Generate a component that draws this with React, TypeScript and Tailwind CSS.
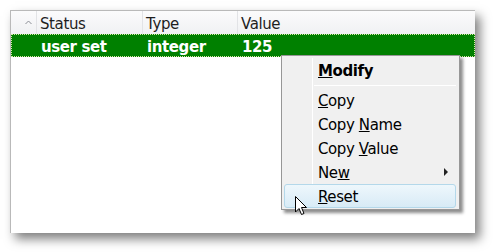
import React from "react";

const font = { fontFamily: '"DejaVu Sans", Verdana, sans-serif' };

function MenuItem({ children, hover, arrow }: { children: React.ReactNode; hover?: boolean; arrow?: boolean }) {
  return (
    <div className="relative h-[24px] flex items-center">
      {hover && (
        <div className="absolute left-[2px] right-[3px] top-[0px] bottom-[0px] rounded-[3px] border border-[#b4d8ea] bg-gradient-to-b from-[#eef7fc] to-[#d8ebf6]" />
      )}
      <span className="relative pl-[36px] pt-[2px] text-[15px] tracking-[-0.4px] text-black">{children}</span>
      {arrow && (
        <svg className="absolute left-[162px] top-[8px]" width="5" height="8" viewBox="0 0 5 8">
          <path d="M0 0 L4 4 L0 8 Z" fill="#222" />
        </svg>
      )}
    </div>
  );
}

export default function App() {
  return (
    <div className="relative w-[493px] h-[252px] bg-white overflow-hidden" style={font}>
      <div className="pt-[10px] pl-[10px]">
        <div className="w-[465px] h-[223px] bg-white border-t border-l border-[#b9b9b9] shadow-[5px_6px_10px_rgba(0,0,0,0.5)]">
          <div className="flex h-[23px] bg-gradient-to-b from-[#fbfbfc] to-[#f0f1f3] text-[15px] tracking-[-0.4px] text-[#1e1e1e] leading-[23px]">
            <div className="w-[26px] border-r border-[#e2e3e6] flex justify-end pr-[4px]">
              <svg width="7" height="23" viewBox="0 0 7 23">
                <path d="M0.5 13 L3.5 10 L6.5 13" fill="none" stroke="#8a8d94" strokeWidth="1" />
              </svg>
            </div>
            <div className="w-[106px] border-r border-[#e2e3e6] pl-[3px] pt-[2px]">Status</div>
            <div className="w-[95px] border-r border-[#e2e3e6] pl-[3px] pt-[2px]">Type</div>
            <div className="flex-1 pl-[3px] pt-[2px]">Value</div>
          </div>
          <div className="flex h-[23px] bg-[#008000] border border-dotted border-[#d6e9a8] text-white font-bold text-[15px] tracking-[-0.4px] leading-[21px]">
            <div className="w-[25px]" />
            <div className="w-[106px] pl-[4px] pt-[2px]">user set</div>
            <div className="w-[95px] pl-[4px] pt-[2px]">integer</div>
            <div className="flex-1 pl-[4px] pt-[2px]">125</div>
          </div>
        </div>
      </div>

      <div className="absolute left-[281px] top-[55px] w-[179px] h-[155px] bg-[#f0f0f0] border border-[#979797] shadow-[3px_3px_3px_rgba(0,0,0,0.45)]">
        <div className="absolute left-[30px] top-[2px] bottom-[2px] w-px bg-[#e2e3e3] border-r border-white" />
        <div className="pt-[2px]">
          <MenuItem>
            <span className="font-bold"><u>M</u>odify</span>
          </MenuItem>
          <div className="h-[6px] flex items-center pl-[32px] pr-[3px]">
            <div className="w-full h-px bg-[#e0e0e0] border-b border-white" />
          </div>
          <MenuItem><u>C</u>opy</MenuItem>
          <MenuItem>Copy <u>N</u>ame</MenuItem>
          <MenuItem>Copy <u>V</u>alue</MenuItem>
          <MenuItem arrow>Ne<u>w</u></MenuItem>
          <MenuItem hover><u>R</u>eset</MenuItem>
        </div>
      </div>

      <svg className="absolute left-[295px] top-[196px]" width="13" height="20" viewBox="0 0 13 20">
        <path d="M0.5 0.5 L0.5 16 L4 12.5 L6.5 18.5 L9 17.5 L6.5 11.5 L11.5 11.5 Z" fill="white" stroke="black" strokeWidth="1" strokeLinejoin="round" />
      </svg>
    </div>
  );
}
